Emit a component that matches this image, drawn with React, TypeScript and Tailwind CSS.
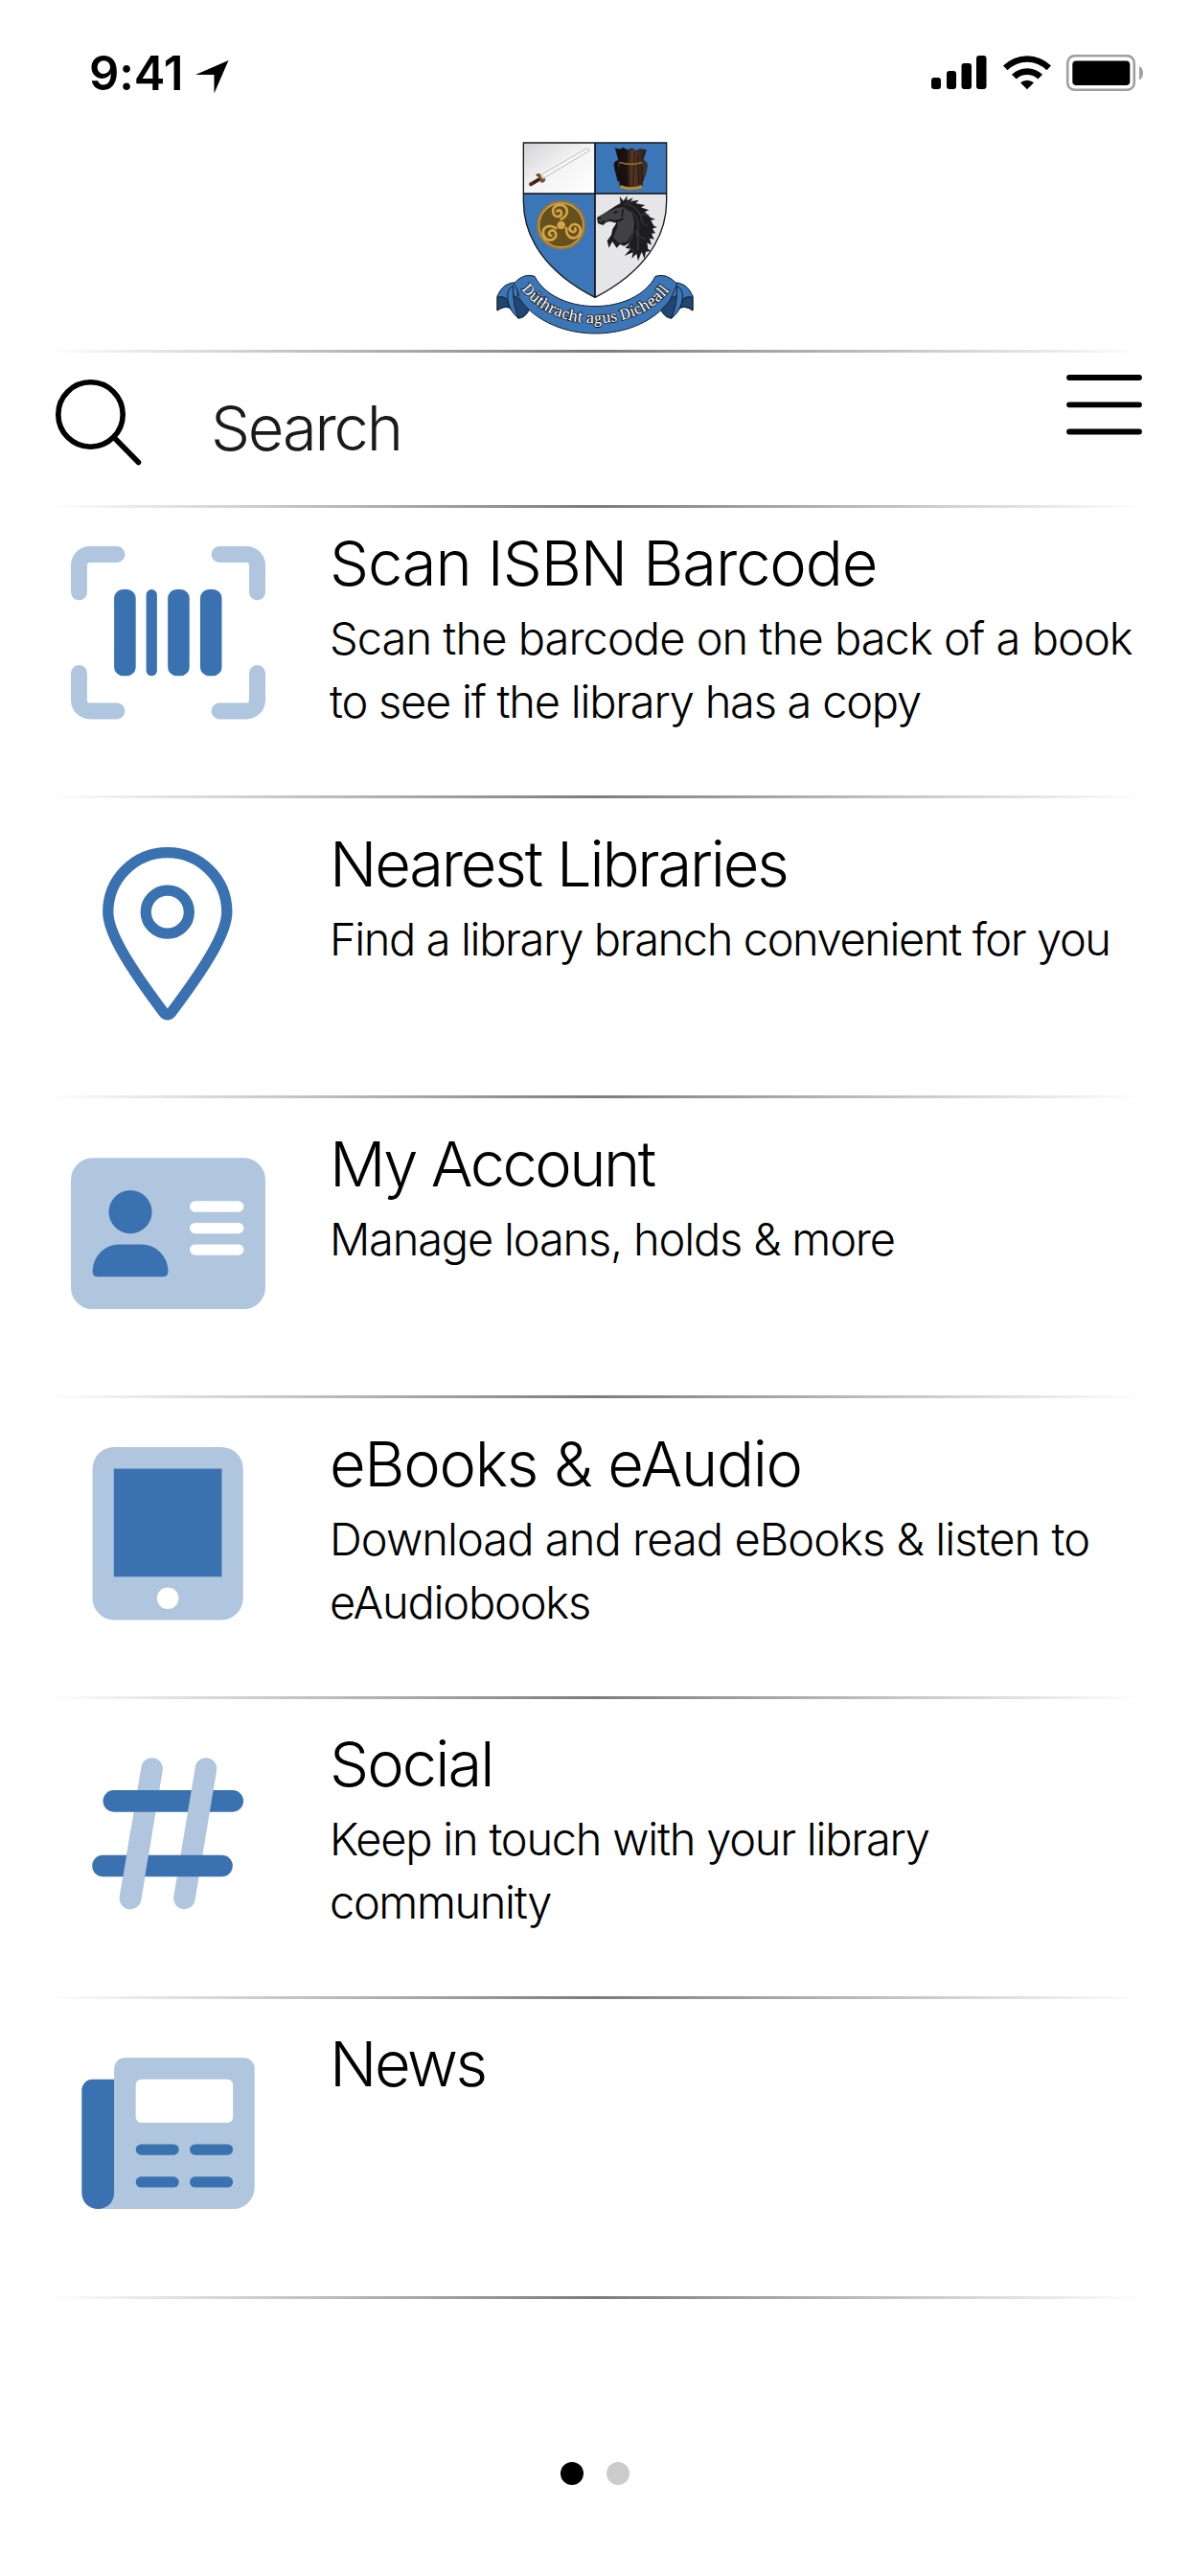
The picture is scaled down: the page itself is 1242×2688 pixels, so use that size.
import type { ReactNode } from 'react';

type MenuLine = {
  text: string;
  tracking: string;
};

type MenuItem = {
  title: string;
  titleTracking: string;
  lines: MenuLine[];
  icon: ReactNode;
};

const LIGHT = '#b0c5de';
const DARK = '#3a71b0';

const Icon = ({ children }: { children: ReactNode }) => (
  <svg viewBox="0 0 576 512" className="h-[180.4px] w-[203px] shrink-0 overflow-visible" fill="none">
    {children}
  </svg>
);

const BarcodeIcon = () => (
  <Icon>
    <g stroke={LIGHT} strokeWidth="48" strokeLinecap="round">
      <path d="M24 136V56a32 32 0 0 1 32-32h80" />
      <path d="M440 24h80a32 32 0 0 1 32 32v80" />
      <path d="M24 376v80a32 32 0 0 0 32 32h80" />
      <path d="M440 488h80a32 32 0 0 0 32-32v-80" />
    </g>
    <g fill={DARK}>
      <rect x="128" y="128" width="64" height="256" rx="26" />
      <rect x="223" y="128" width="32" height="256" rx="16" />
      <rect x="287" y="128" width="64" height="256" rx="26" />
      <rect x="383" y="128" width="64" height="256" rx="26" />
    </g>
  </Icon>
);

const PinIcon = () => (
  <Icon>
    <g stroke={DARK} strokeWidth="32" transform="translate(94 0)">
      <path d="M192 16a176 176 0 0 1 176 176c0 66-74 177-165 298q-11 12-22 0C90 369 16 258 16 192A176 176 0 0 1 192 16z" />
      <circle cx="192" cy="192" r="64" />
    </g>
  </Icon>
);

const AccountIcon = () => (
  <Icon>
    <rect y="32" width="576" height="448" rx="64" fill={LIGHT} />
    <circle cx="176" cy="192" r="64" fill={DARK} />
    <path d="M64 368a80 80 0 0 1 80-80h64a80 80 0 0 1 80 80q0 16-16 16H80q-16 0-16-16z" fill={DARK} />
    <g fill="#fff">
      <rect x="352" y="160" width="160" height="32" rx="16" />
      <rect x="352" y="224" width="160" height="32" rx="16" />
      <rect x="352" y="288" width="160" height="32" rx="16" />
    </g>
  </Icon>
);

const TabletIcon = () => (
  <Icon>
    <rect x="64" width="446" height="512" rx="64" fill={LIGHT} />
    <rect x="127" y="64" width="320" height="320" fill={DARK} />
    <circle cx="287" cy="448" r="32" fill="#fff" />
  </Icon>
);

const HashIcon = () => (
  <Icon>
    <g strokeWidth="64" strokeLinecap="round">
      <path d="M240 64L176 448" stroke={LIGHT} />
      <path d="M127 160H479" stroke={DARK} />
      <path d="M400 64L336 448" stroke={LIGHT} />
      <path d="M95 352H447" stroke={DARK} />
      <path d="M208 256L176 448" stroke={LIGHT} />
    </g>
  </Icon>
);

const NewsIcon = () => (
  <Icon>
    <g transform="translate(32 32)">
      <path d="M96 32a32 32 0 0 1 32-32h352a32 32 0 0 1 32 32v352a64 64 0 0 1-64 64H48q48-20 48-60z" fill={LIGHT} />
      <path d="M32 64h64v336a48 48 0 0 1-96 0V96a32 32 0 0 1 32-32z" fill={DARK} />
      <rect x="160" y="64" width="288" height="128" rx="16" fill="#fff" />
      <g fill={DARK}>
        <rect x="160" y="256" width="128" height="32" rx="16" />
        <rect x="320" y="256" width="128" height="32" rx="16" />
        <rect x="160" y="352" width="128" height="32" rx="16" />
        <rect x="320" y="352" width="128" height="32" rx="16" />
      </g>
    </g>
  </Icon>
);

const menuItems: MenuItem[] = [
  {
    title: 'Scan ISBN Barcode',
    titleTracking: 'tracking-[-1.1px]',
    lines: [
      { text: 'Scan the barcode on the back of a book', tracking: 'tracking-[-0.95px]' },
      { text: 'to see if the library has a copy', tracking: 'tracking-[-1.25px]' },
    ],
    icon: <BarcodeIcon />,
  },
  {
    title: 'Nearest Libraries',
    titleTracking: 'tracking-[-2.2px]',
    lines: [{ text: 'Find a library branch convenient for you', tracking: 'tracking-[-1.4px]' }],
    icon: <PinIcon />,
  },
  {
    title: 'My Account',
    titleTracking: 'tracking-[-2.5px]',
    lines: [{ text: 'Manage loans, holds & more', tracking: 'tracking-[-1.2px]' }],
    icon: <AccountIcon />,
  },
  {
    title: 'eBooks & eAudio',
    titleTracking: 'tracking-[-1.3px]',
    lines: [
      { text: 'Download and read eBooks & listen to', tracking: 'tracking-[-0.95px]' },
      { text: 'eAudiobooks', tracking: 'tracking-[-1.2px]' },
    ],
    icon: <TabletIcon />,
  },
  {
    title: 'Social',
    titleTracking: 'tracking-[-1.9px]',
    lines: [
      { text: 'Keep in touch with your library', tracking: 'tracking-[-1.25px]' },
      { text: 'community', tracking: 'tracking-[-1.4px]' },
    ],
    icon: <HashIcon />,
  },
  { title: 'News', titleTracking: 'tracking-[-2.4px]', lines: [], icon: <NewsIcon /> },
];

const Divider = () => (
  <div className="mx-[50px] h-[3px] shrink-0 bg-linear-to-r from-transparent via-[#7c7c7c] to-transparent" />
);

const StatusBar = () => (
  <div className="flex h-[130px] shrink-0 items-start justify-between pt-[49px] pr-[46px] pl-[93px]">
    <div className="flex items-start">
      <span className="text-[49px] leading-[56px] font-semibold tracking-[-0.1px]">9:41</span>
      <svg viewBox="0 0 36 36" className="mt-[13px] ml-[12px] h-[36px] w-[36px]">
        <path d="M35.5 1L20.5 35.5V16H1z" />
      </svg>
    </div>
    <svg viewBox="0 0 224 42" className="mt-[8px] h-[42px] w-[224px]">
      <rect x="0" y="24" width="10" height="12" rx="3" />
      <rect x="16" y="17" width="10" height="19" rx="3" />
      <rect x="31.500" y="9" width="10.500" height="27" rx="3" />
      <rect x="47" y="1" width="10.500" height="35" rx="3" />
      <path d="M75 11.500a35.500 35.500 0 0 1 50 0l-4.500 4.700a29 29 0 0 0-41 0z" />
      <path d="M84 20.700a23 23 0 0 1 32 0l-4.700 4.700a16.500 16.500 0 0 0-22.600 0z" />
      <path d="M93 29.200a11 11 0 0 1 14 0l-7 7z" />
      <rect x="142.200" y="1.200" width="69.600" height="35.600" rx="7.500" fill="none" stroke="#9f9f9f" strokeWidth="2.600" />
      <rect x="147.300" y="6.500" width="60" height="25.500" rx="4" />
      <path d="M217 12c5.300 3 5.300 11.500 0 14.500z" fill="#9f9f9f" />
    </svg>
  </div>
);

// One arm of the triskele, rotated three times around the hub
const Spiral = ({ angle }: { angle: number }) => (
  <path
    d="M257 296C279 286 282 262 262 253C244 247 228 260 232 276C236 292 257 291 258 278C258 268 248 265 244 272"
    transform={`rotate(${angle} 257 315)`}
  />
);

const Crest = () => (
  <svg viewBox="3 0 720 705" className="h-[235px] w-[240px]">
    <defs>
      <linearGradient id="silver" x1="0" y1="0" x2="1" y2="1">
        <stop offset="0" stopColor="#d2d2d4" />
        <stop offset="0.500" stopColor="#f4f4f5" />
        <stop offset="1" stopColor="#fff" />
      </linearGradient>
      <linearGradient id="wood">
        <stop offset="0" stopColor="#120d0b" />
        <stop offset="0.350" stopColor="#1b120e" />
        <stop offset="0.550" stopColor="#5b3a28" />
        <stop offset="1" stopColor="#2b1a13" />
      </linearGradient>
      <clipPath id="shield">
        <path d="M139 57H587V240C587 350 520 460 363 541C205 460 139 350 139 240z" />
      </clipPath>
      <path id="motto" d="M131 513C235 658 490 658 598 517L640 462" />
    </defs>

    <g clipPath="url(#shield)">
      <rect x="139" y="57" width="224" height="160" fill="url(#silver)" />
      <rect x="363" y="57" width="224" height="160" fill="#3b76b9" />
      <rect x="139" y="216" width="224" height="330" fill="#3b76b9" />
      <rect x="363" y="216" width="224" height="330" fill="#e6e6e8" />
    </g>

    {/* sword */}
    <path d="M196 157L334 76Q346 71 345 82L203 167z" fill="#fff" stroke="#a9a9a9" strokeWidth="2.500" />
    <path d="M199 163L338 80" stroke="#dedede" strokeWidth="1.500" />
    <path d="M162 187L192 169" stroke="#3b2316" strokeWidth="11" strokeLinecap="round" />
    <path d="M185 157L200 177M182 158q6-3 8 2M196 178q6 0 8-6" stroke="#7b5226" strokeWidth="8" strokeLinecap="round" fill="none" />
    <circle cx="163" cy="186" r="6" fill="#5a3a1e" />

    {/* wooden vessel */}
    <g stroke="#120c09" strokeWidth="2">
      <path d="M437 113Q418 112 425 138L435 178L443 172L435 125z" fill="#17100d" />
      <path d="M511 113Q531 112 524 142L513 178L505 170L514 128z" fill="#4a2f22" />
      <path d="M427 74L440 78L451 73L464 80L478 75L492 83L504 77L523 80L510 120L511 198Q476 212 441 198L439 120z" fill="url(#wood)" />
      <path d="M462 84L467 190M486 86L482 192M497 96L500 186" stroke="#24160f" strokeWidth="3" />
    </g>
    <path d="M439 118Q476 130 512 118" stroke="#8a6431" strokeWidth="6" fill="none" />
    <path d="M441 194Q476 208 511 194" stroke="#b08a42" strokeWidth="11" fill="none" />

    {/* triskele */}
    <circle cx="257" cy="315" r="74" fill="#66501b" stroke="#a17a2c" strokeWidth="5" />
    <circle cx="257" cy="315" r="69" fill="none" stroke="#d3a548" strokeWidth="4" />
    <circle cx="257" cy="315" r="13" fill="#d3a548" />
    <g fill="none" stroke="#d3a548" strokeWidth="8" strokeLinecap="round">
      <Spiral angle={0} />
      <Spiral angle={120} />
      <Spiral angle={240} />
    </g>

    {/* horse head */}
    <path
      d="M369 291L391 278L412 265L428 254L443 246L440 224L452 239L464 222L463 238L482 229L475 241L500 236L491 247L520 252L507 259L532 268L519 273L537 291L552 296L538 300L548 318L558 320L543 326L552 340L540 341L548 359L534 356L540 377L526 370L529 389L538 396L522 398L518 421L509 398L498 427L493 404L478 419L482 400L455 411L474 389L458 386L472 370L454 380L441 375L431 386L417 366L407 386L401 364L414 346L418 327L430 308L410 303L398 306L388 315L372 309z"
      fill="#1d1d1f"
    />
    <path d="M372 290L402 274L430 261L452 258L478 276L486 302L481 337L463 366L440 372L420 354L433 322L434 301L410 296L390 308L374 303z" fill="#414144" />
    <path d="M422 276l12-3M374 293l8 2M385 306l9-5M452 265q-6 14-3 22M430 300q14 4 20-8" stroke="#0c0c0d" strokeWidth="4" fill="none" />
    <path
      d="M466 250Q500 260 507 290T528 318M475 270Q502 292 498 324T521 357M482 307Q486 340 473 362T486 396M492 330Q503 360 497 393M455 250L484 238M508 280L533 282"
      stroke="#55555a"
      strokeWidth="2"
      fill="none"
    />

    <path d="M139 57H587V240C587 350 520 460 363 541C205 460 139 350 139 240z" fill="none" stroke="#17191d" strokeWidth="4" />
    <path d="M363 57V540M139 216H587" stroke="#0f1012" strokeWidth="5" />

    {/* ribbon */}
    <g stroke="#14202e" strokeWidth="3" strokeLinejoin="round">
      <path d="M120 494Q75 492 57 537V582Q76 567 95 573L124 606z" fill="#3b76b9" />
      <path d="M57 540Q75 535 89 547L95 573Q76 567 57 582z" fill="#21466f" />
      <path d="M606 494Q651 492 669 537V582Q650 567 631 573L602 606z" fill="#3b76b9" />
      <path d="M669 540Q651 535 637 547L631 573Q650 567 669 582z" fill="#21466f" />
      <path d="M104 533Q135 548 158 578Q146 604 124 607Q101 590 104 533z" fill="#21466f" />
      <path d="M622 533Q591 548 568 578Q580 604 602 607Q625 590 622 533z" fill="#21466f" />
      <path d="M106 505Q86 516 89 545Q94 584 124 607Q106 570 106 505z" fill="#3b76b9" />
      <path d="M620 505Q640 516 637 545Q632 584 602 607Q620 570 620 505z" fill="#3b76b9" />
      <path d="M108 499Q138 463 174 475C240 600 487 600 552 475Q588 463 620 499L600 546C500 690 230 690 127 546Q124 518 108 499z" fill="#3b76b9" />
    </g>
    <text
      fontFamily="'Noto Serif', 'Liberation Serif', serif"
      fontSize="46"
      fill="#fff"
      stroke="#141414"
      strokeWidth="5"
      paintOrder="stroke"
    >
      <textPath href="#motto" startOffset="2" textLength="528" lengthAdjust="spacingAndGlyphs">
        Dúthracht agus Dícheall
      </textPath>
    </text>
  </svg>
);

const SearchBar = () => (
  <div className="flex h-[159px] shrink-0 items-start justify-between pr-[50px] pl-[58px]">
    <div className="flex items-start">
      <svg viewBox="0 0 90 92" className="mt-[28px] h-[92px] w-[90px]" fill="none" stroke="#000" strokeWidth="5.600">
        <circle cx="36.500" cy="36.500" r="33.700" />
        <path d="M61 60.500L86.500 86.500" strokeLinecap="round" />
      </svg>
      <span className="mt-[39px] ml-[72px] text-[65px] leading-[80px] font-light tracking-[-2.2px] text-[#1a1a1a]">
        Search
      </span>
    </div>
    <svg viewBox="0 0 79 64" className="mt-[22px] h-[64px] w-[79px]" stroke="#000" strokeWidth="5.800" strokeLinecap="round">
      <path d="M3 4H76M3 32.300H76M3 60.500H76" />
    </svg>
  </div>
);

const MenuRow = ({ item, first }: { item: MenuItem; first: boolean }) => (
  <div className={first ? 'flex h-[303px] shrink-0 flex-col' : 'flex h-[313.2px] shrink-0 flex-col'}>
    <div className={first ? 'flex grow pt-[40px] pl-[74px]' : 'flex grow pt-[50.5px] pl-[74px]'}>
      {item.icon}
      <div className="-mt-[22px] ml-[67px] flex flex-col font-light whitespace-nowrap text-black">
        <h2 className={`text-[65px] leading-[80px] ${item.titleTracking}`}>{item.title}</h2>
        <p className="mt-[5px] text-[47px] leading-[66px]">
          {item.lines.map((line) => (
            <span key={line.text} className={`block ${line.tracking}`}>
              {line.text}
            </span>
          ))}
        </p>
      </div>
    </div>
    <Divider />
  </div>
);

export default function App() {
  return (
    <div className="flex h-[2688px] w-[1242px] flex-col overflow-hidden bg-white font-['Inter','Liberation_Sans',sans-serif] text-black">
      <StatusBar />
      <div className="flex h-[235px] shrink-0 justify-center">
        <Crest />
      </div>
      <Divider />
      <SearchBar />
      <Divider />
      {menuItems.map((item, index) => (
        <MenuRow key={item.title} item={item} first={index === 0} />
      ))}
      <div className="mt-[170px] flex justify-center gap-[24px]">
        <span className="size-[24px] rounded-full bg-black" />
        <span className="size-[24px] rounded-full bg-[#ccc]" />
      </div>
    </div>
  );
}
